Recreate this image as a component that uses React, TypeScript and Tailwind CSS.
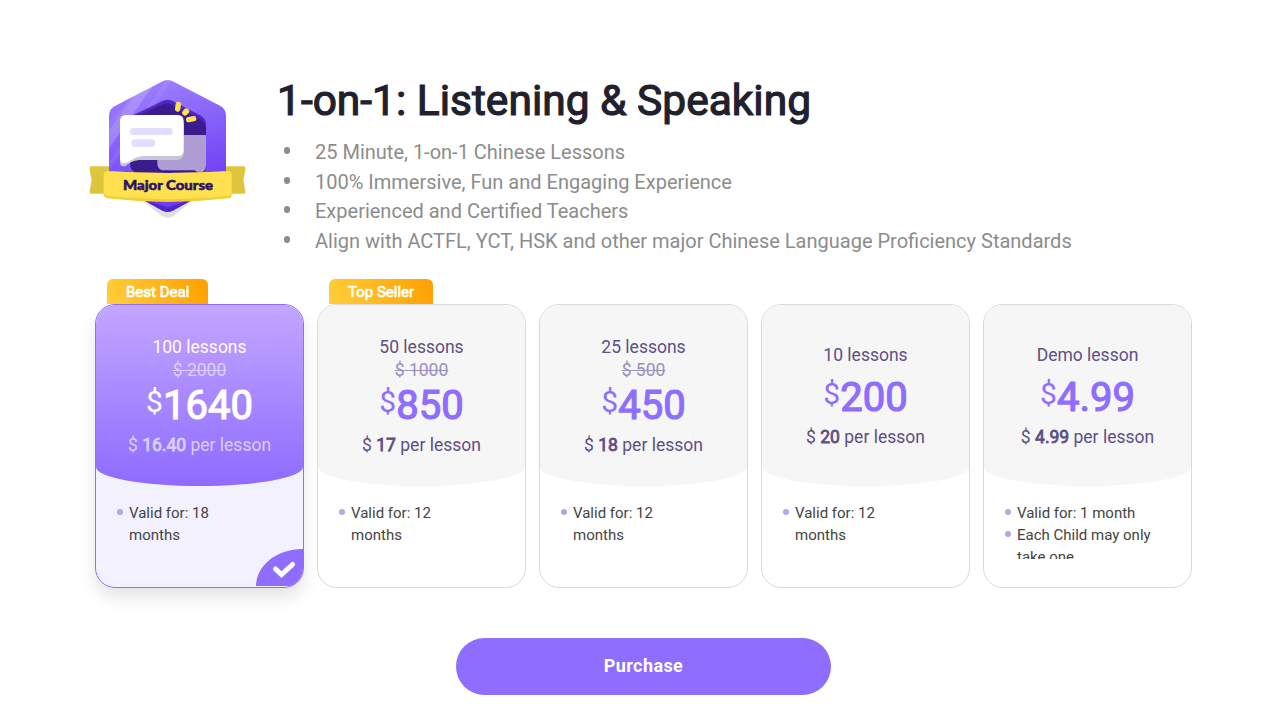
import { useState } from 'react'

const plans = [
    { id: 1, tag: 'Best Deal', name: '100 lessons', old: '2000', price: '1640', per: '16.40', notes: ['Valid for: 18\nmonths'] },
    { id: 2, tag: 'Top Seller', name: '50 lessons', old: '1000', price: '850', per: '17', notes: ['Valid for: 12\nmonths'] },
    { id: 3, tag: '', name: '25 lessons', old: '500', price: '450', per: '18', notes: ['Valid for: 12\nmonths'] },
    { id: 4, tag: '', name: '10 lessons', old: '', price: '200', per: '20', notes: ['Valid for: 12\nmonths'] },
    { id: 5, tag: '', name: 'Demo lesson', old: '', price: '4.99', per: '4.99', notes: ['Valid for: 1 month', 'Each Child may only\ntake one'] },
]

const features = [
    '25 Minute, 1-on-1 Chinese Lessons',
    '100% Immersive, Fun and Engaging Experience',
    'Experienced and Certified Teachers',
    'Align with ACTFL, YCT, HSK and other major Chinese Language Proficiency Standards',
]

function Badge() {
    return (
        <svg width="180" height="160" viewBox="0 0 540 480" className="shrink-0">
            <defs>
                <linearGradient id="hex" x1="0.2" y1="0" x2="0.45" y2="1">
                    <stop offset="0" stopColor="#a084ff" />
                    <stop offset="0.75" stopColor="#7448f5" />
                    <stop offset="1" stopColor="#6a38f0" />
                </linearGradient>
                <clipPath id="hexClip">
                    <path d="M245 35Q263 25 281 35L420 107Q438 117 438 136V318Q438 334 420 343L281 421Q263 431 245 421L106 343Q87 334 87 318V136Q87 117 106 107Z" />
                </clipPath>
            </defs>
            <path d="M160 370H366L281 438Q263 449 245 438Z" fill="#e0e0e0" />
            <g clipPath="url(#hexClip)">
                <rect x="80" y="20" width="370" height="420" fill="url(#hex)" />
                <path d="M190 40L238 20L80 245V190Z" fill="#fff" fillOpacity="0.13" />
                <path d="M190 40L80 165V245L225 40Z M262 25L80 285V310L280 25Z" fill="#fff" fillOpacity="0.07" />
                <path d="M190 388L263 412L340 388V440H190Z" fill="#4f27cc" />
            </g>
            <path d="M150 150Q150 140 160 135L248 93Q263 85 278 93L364 138Q378 147 378 163V290Q378 310 355 310H175Q150 306 150 280Z" fill="#5126c4" />
            <path d="M150 160Q150 150 160 145L248 103Q263 98 278 104L364 150Q378 159 378 175V290Q378 310 355 310H175Q150 306 150 280Z" fill="#3a1c8c" />
            <path d="M232 195H378V288Q376 306 358 309L343 301H250Q232 300 232 280Z" fill="#ad9dd2" />
            <path d="M120 158V278Q121 292 137 288C152 276 163 270 185 270H292Q311 268 311 248V160Z" fill="#c9c5d8" />
            <path d="M138 135H293Q311 135 311 153V240Q311 258 293 258H190C160 260 154 276 136 279Q120 282 120 265V153Q120 135 138 135Z" fill="#fff" />
            <rect x="150" y="174" width="128" height="21" rx="10" fill="#e4dcff" />
            <rect x="154" y="208" width="72" height="23" rx="11" fill="#e4dcff" />
            <g stroke="#ffdf4d" strokeWidth="16" strokeLinecap="round">
                <path d="M295 103L293 117" />
                <path d="M315 128L319 124" strokeWidth="17" />
                <path d="M326 149L341 146" />
            </g>
            <path d="M34 289H87V371H34Q27 371 29 362L35 331L29 300Q27 289 34 289Z" fill="#dfc53b" />
            <path d="M491 289H438V371H491Q498 371 496 362L490 331L496 300Q498 289 491 289Z" fill="#dfc53b" />
            <path d="M82 304Q263 314 445 304Q455 304 455 314V375Q455 385 444 385Q263 407 83 385Q71 383 71 373V316Q71 304 82 304Z" fill="#f2cd35" />
            <path d="M82 304Q263 314 445 304Q455 304 455 314V367Q455 377 444 378Q263 398 83 378Q71 377 71 367V316Q71 304 82 304Z" fill="#ffe04f" />
            <text x="264" y="360" textAnchor="middle" textLength="270" lengthAdjust="spacingAndGlyphs" fontFamily="Lato, sans-serif" fontWeight="900" fontSize="39" fill="#2d1166" stroke="#2d1166" strokeWidth="1.5" strokeLinejoin="round">Major Course</text>
        </svg>
    )
}

export default function App() {
    const [selected, setSelected] = useState(1)

    return (
        <div className="w-[1284px] h-[723px] overflow-hidden bg-white font-[Roboto,sans-serif] pt-[70px]">
            <div className="flex pl-20">
                <Badge />
                <div className="pl-[17px] pt-[5px]">
                    <h1 className="text-[42.5px] leading-[52px] text-[#221f2e] [-webkit-text-stroke:1.2px_#221f2e]">1-on-1: Listening &amp; Speaking</h1>
                    <ul className="pt-[11px] text-[20px] leading-[29.6px] text-[#8c8c8c]">
                        {features.map((item) => (
                            <li key={item} className="flex whitespace-nowrap">
                                <span className="w-[6px] h-[7px] mt-[9px] ml-[7px] mr-[25px] rounded-full bg-[#8c8c8c]"></span>
                                {item}
                            </li>
                        ))}
                    </ul>
                </div>
            </div>

            {/* PLANS */}
            <div className="flex gap-[13px] pl-[95px] pt-[23px]">
                {plans.map((plan) => {
                    const active = plan.id === selected
                    return (
                        <div key={plan.id} className="w-[209px] h-[309px] cursor-pointer" onClick={() => setSelected(plan.id)}>
                            <div className="h-[25px] flex pl-3">
                                {plan.tag && (
                                    <span className="h-[25px] px-[19px] rounded-t-[6px] bg-linear-[70deg,#ffcf3a,#ff9f00] text-white text-[15px] leading-[26px] [-webkit-text-stroke:0.7px_white]">{plan.tag}</span>
                                )}
                            </div>
                            <div className={'rounded-[20px] ' + (active ? 'shadow-[0_10px_16px_rgba(0,0,0,0.1)]' : '')}>
                                <div className={'relative h-[284px] rounded-[20px] border overflow-hidden ' + (active ? 'border-[#8f6dff] bg-[#f4f1ff]' : 'border-[#d9d9d9] bg-white')}>
                                    <div className={'h-[181px] flex flex-col items-center justify-center rounded-b-[50%_19px] text-[17.5px] ' + (active ? 'bg-linear-to-b from-[#c4a5ff] to-[#8f6bff] text-white' : 'bg-[#f6f6f6] text-[#5c5085]')}>
                                        <p className="leading-[30px] -mt-px mb-px">{plan.name}</p>
                                        {plan.old && (
                                            <p className={'leading-[16px] -mt-px mb-px line-through ' + (active ? 'text-[#dccfff]' : 'text-[#9b8fc0]')}>$ {plan.old}</p>
                                        )}
                                        <p className={'h-[54px] flex leading-[54px] ' + (active ? 'text-white' : 'text-[#8f6dff]')}>
                                            <span className="text-[30px] leading-[46px]">$</span>
                                            <span className="text-[40px] [-webkit-text-stroke:1.2px_currentColor]">{plan.price}</span>
                                        </p>
                                        <p className={'leading-[26px] -mt-px mb-px ' + (active ? 'text-[#dccfff]' : '')}>
                                            $ <span className="[-webkit-text-stroke:0.8px_currentColor]">{plan.per}</span> per lesson
                                        </p>
                                    </div>
                                    <ul className="h-[57px] mt-[16px] pl-[21px] overflow-hidden text-[15px] leading-[22px] text-[#444]">
                                        {plan.notes.map((note) => (
                                            <li key={note} className="flex whitespace-pre-line">
                                                <span className="w-[6px] h-[6px] mt-[7px] mr-[6px] shrink-0 rounded-full bg-[#b5a4e8]"></span>
                                                {note}
                                            </li>
                                        ))}
                                    </ul>
                                    {active && (
                                        <svg className="absolute right-0 bottom-[1px]" width="47" height="37" viewBox="0 0 47 37">
                                            <path d="M0 37C0 17 20 0 47 0V37Z" fill="#8f6dff" />
                                            <path d="M19.5 20L25.5 25.5L36.5 15.5" fill="none" stroke="#fff" strokeWidth="5" strokeLinecap="round" />
                                        </svg>
                                    )}
                                </div>
                            </div>
                        </div>
                    )
                })}
            </div>

            <div className="flex pl-[456px] pt-[50px]">
                <button className="w-[375px] h-[57px] pb-0.5 rounded-full bg-[#8f6dff] text-white text-[18px] font-bold tracking-[0.4px]">Purchase</button>
            </div>
        </div>
    )
}
